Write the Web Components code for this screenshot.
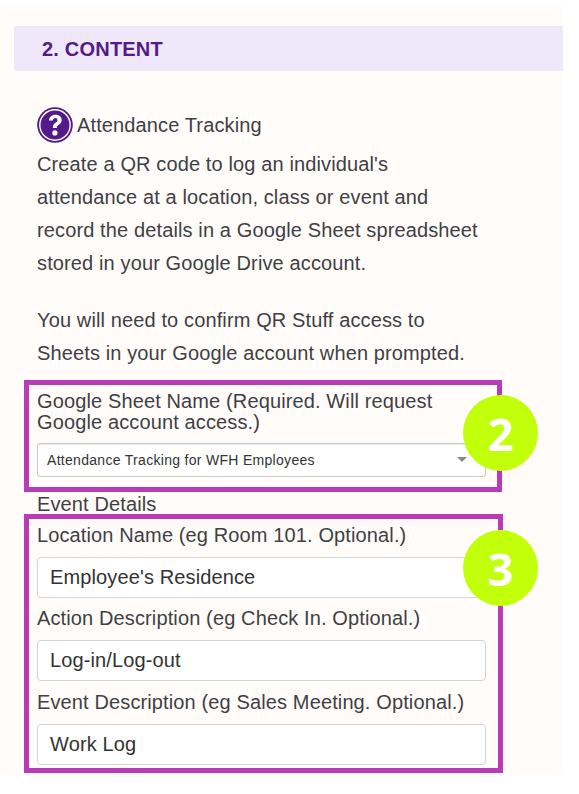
<!DOCTYPE html>
<html><head><meta charset="utf-8"><style>
html,body{margin:0;background:#fff;}
body{width:579px;height:794px;overflow:hidden;font-family:"Liberation Sans",Arial,sans-serif;color:#3f3f46;}
</style></head><body>
<qs-panel>
  <qs-heading>2. CONTENT</qs-heading>
  <qs-intro title-text="Attendance Tracking">
    <p>Create a QR code to log an individual's attendance at a location, class or event and record the details in a Google Sheet spreadsheet stored in your Google Drive account.</p>
    <p>You will need to confirm QR Stuff access to Sheets in your Google account when prompted.</p>
  </qs-intro>
  <qs-highlight badge="2" class="first">
    <qs-field label="Google Sheet Name (Required. Will request Google account access.)" kind="select" value="Attendance Tracking for WFH Employees"></qs-field>
  </qs-highlight>
  <qs-caption>Event Details</qs-caption>
  <qs-highlight badge="3" class="second">
    <qs-field label="Location Name (eg Room 101. Optional.)" value="Employee's Residence"></qs-field>
    <qs-field label="Action Description (eg Check In. Optional.)" value="Log-in/Log-out"></qs-field>
    <qs-field label="Event Description (eg Sales Meeting. Optional.)" value="Work Log"></qs-field>
  </qs-highlight>
</qs-panel>
<script>
function def(name, html, init){
  customElements.define(name, class extends HTMLElement{
    constructor(){super();this.attachShadow({mode:'open'}).innerHTML=html;}
    connectedCallback(){ if(init) init(this,this.shadowRoot); }
  });
}
def('qs-panel',`<style>:host{display:flex;flex-direction:column;box-sizing:border-box;width:563px;height:770px;margin-top:5px;padding-top:21px;background:#fffcf9;letter-spacing:.125px;}</style><slot></slot>`);
def('qs-heading',`<style>:host{display:block;box-sizing:border-box;margin-left:14px;height:45px;padding-left:28px;background:#efe8fa;border-radius:3px 0 0 3px;color:#541a87;font-weight:700;font-size:20px;line-height:46px;letter-spacing:.2px;}</style><slot></slot>`);
def('qs-intro',`<style>:host{display:block;margin:35px 83px 0 37px;font-size:20px;color:#3f3f46;}
.t{display:flex;align-items:center;gap:4px;height:38px;}
svg{display:block;width:36px;height:36px;flex:none;}
::slotted(p){margin:0 0 24px;line-height:33px;}
::slotted(p:last-child){margin-bottom:0;}
.b{margin-top:4px;}</style>
<div class="t"><svg viewBox="0 0 36 36"><circle cx="18" cy="18" r="17.8" fill="#541a87"/><circle cx="18" cy="18" r="15.2" fill="none" stroke="#fff" stroke-width="1.4"/><path d="M11.9 13.6C12.2 9.9 14.8 7.7 18.4 7.7c3.7 0 6.3 2.1 6.3 5.3 0 2.5-1.4 3.8-3.2 5-1.4.9-1.7 1.5-1.7 3h-3.9c-.1-2.5.5-3.8 2.3-5 1.5-1 2.3-1.6 2.3-2.8 0-1.3-1-2.1-2.2-2.1-1.5 0-2.4 1-2.5 2.5z" fill="#fff"/><circle cx="17.9" cy="25.9" r="2.6" fill="#fff"/></svg><span id="x"></span></div><div class="b"><slot></slot></div>`,
(el,r)=>{r.getElementById('x').textContent=el.getAttribute('title-text');});
def('qs-highlight',`<style>:host{display:block;position:relative;box-sizing:border-box;margin-left:24px;border:5px solid #b83cb8;padding:0 0 0 8px;}
:host(.first){width:478px;height:112px;margin-top:10px;padding-top:6px;}
:host(.second){width:479px;height:259px;padding-top:4.9px;}
.badge{position:absolute;left:434px;width:75px;height:76px;border-radius:50%;background:#c2ff0a;color:#fff;font-family:"Open Sans","Noto Sans",sans-serif;font-weight:700;font-size:45px;line-height:78px;text-align:center;letter-spacing:0;}
:host(.first) .badge{top:10px;}
:host(.second) .badge{top:11px;}
</style><slot></slot><div class="badge" id="b"></div>`,
(el,r)=>{r.getElementById('b').textContent=el.getAttribute('badge');});
def('qs-caption',`<style>:host{display:block;margin-left:37px;height:22px;font-size:20px;line-height:24px;color:#3f3f46;}</style><slot></slot>`);
def('qs-field',`<style>:host{display:block;width:449px;font-size:20px;color:#3f3f46;}
.l{line-height:20.5px;padding-bottom:11px;}
.s{position:relative;box-sizing:border-box;height:34px;background:#fff;border:1px solid #ccc;border-top-color:#c8c8c8;border-radius:4px;box-shadow:inset 0 1px 1px rgba(0,0,0,.08);font-size:14px;letter-spacing:.3px;line-height:32px;padding-left:9px;color:#333;}
.s::after{content:"";position:absolute;right:18px;top:13px;border:5px solid transparent;border-top-color:#888;border-bottom:0;}
.i{box-sizing:border-box;height:41px;background:#fff;border:1px solid #d4d4d4;border-radius:4px;line-height:39px;padding-left:12px;color:#333;}
.plain .l{padding-bottom:10px;line-height:23px;}
.plain{height:83.5px;}
</style><div id="w"></div>`,
(el,r)=>{const sel=el.getAttribute('kind')==='select';const w=r.getElementById('w');
 const l=document.createElement('div');l.className='l';l.textContent=el.getAttribute('label');
 const v=document.createElement('div');v.className=sel?'s':'i';v.textContent=el.getAttribute('value');
 w.className=sel?'':'plain';w.append(l,v);});
</script>
</body></html>
